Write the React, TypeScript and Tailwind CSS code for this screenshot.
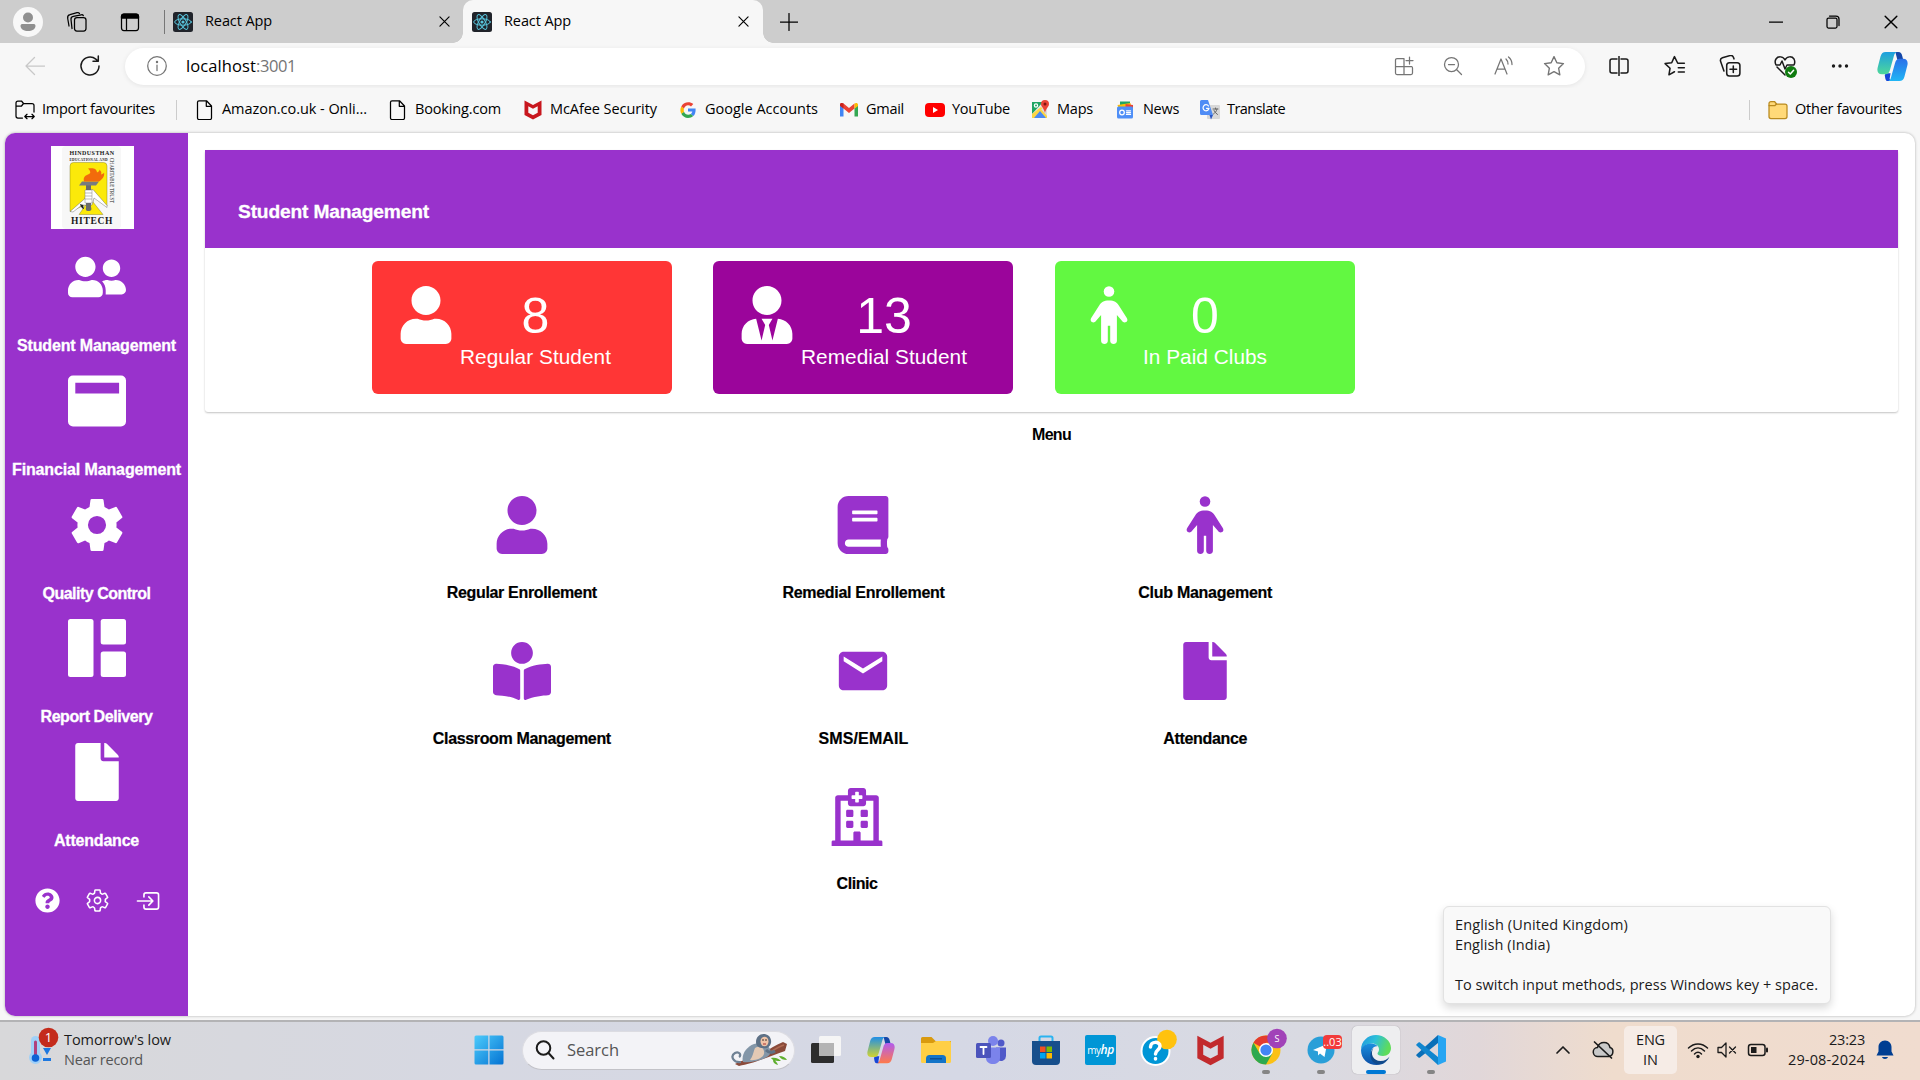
import React, { useLayoutEffect, useRef, useState } from 'react';
import { FaUserFriends, FaFile, FaUser, FaUserTie, FaBook, FaBookReader, FaRegHospital, FaQuestionCircle } from 'react-icons/fa';
import { MdEmail } from 'react-icons/md';
import { IoSettingsOutline, IoEnterOutline, IoSettingsSharp } from 'react-icons/io5';

type Kids = { children?: React.ReactNode };

/* One line of text tracked so that it fills the given width. */
function Fit({ w, className = '', children }: { w: number; className?: string; children: string }) {
  const ref = useRef<HTMLSpanElement>(null);
  const [ls, setLs] = useState(0);
  useLayoutEffect(() => {
    const el = ref.current;
    if (el) setLs((w - el.getBoundingClientRect().width) / children.length);
  }, []);
  return (
    <span className={`block shrink-0 whitespace-pre ${className}`} style={{ width: w }}>
      <span ref={ref} className="inline-block" style={{ letterSpacing: ls }}>{children}</span>
    </span>
  );
}

function Svg({ s = 20, vb = 20, className = '', children }: Kids & { s?: number; vb?: number; className?: string }) {
  return (
    <svg width={s} height={s} viewBox={`0 0 ${vb} ${vb}`} fill="none" stroke="currentColor" strokeWidth={1.25} strokeLinecap="round" strokeLinejoin="round" className={`block shrink-0 ${className}`}>
      {children}
    </svg>
  );
}

const ReactFav = ({ className = '' }: { className?: string }) => (
  <Svg className={className}>
    <rect width="20" height="20" rx="2.500" fill="#20232a" stroke="none" />
    <g stroke="#58c4dc" strokeWidth="1">
      <ellipse cx="10" cy="10" rx="8.300" ry="3.200" />
      <ellipse cx="10" cy="10" rx="8.300" ry="3.200" transform="rotate(60 10 10)" />
      <ellipse cx="10" cy="10" rx="8.300" ry="3.200" transform="rotate(120 10 10)" />
    </g>
    <circle cx="10" cy="10" r="1.600" fill="#58c4dc" stroke="none" />
  </Svg>
);

const Cross = ({ className = '', s = 12 }: { className?: string; s?: number }) => (
  <Svg s={s} vb={12} className={className}><path d="M1 1l10 10M11 1L1 11" /></Svg>
);

const McAfee = ({ s = 20, c = '#c8171e' }: { s?: number; c?: string }) => (
  <Svg s={s}><path d="M1.500 .5L10 5l8.500-4.500v14.500L10 19.500l-8.500-4.500zM5.300 6.300v6.500L10 15.200l4.700-2.400V6.300L10 8.800z" fill={c} fillRule="evenodd" stroke="none" /></Svg>
);

const Ribbon = ({ s, a, b, c, d, id }: { s: number; a: string; b: string; c: string; d: string; id: string }) => (
  <Svg s={s} vb={32}>
    <defs>
      <linearGradient id={`${id}a`} x1="0" y1="0" x2="0" y2="1"><stop stopColor={a} /><stop offset="1" stopColor={b} /></linearGradient>
      <linearGradient id={`${id}b`} x1="0" y1="0" x2="0" y2="1"><stop stopColor={c} /><stop offset="1" stopColor={d} /></linearGradient>
    </defs>
    <g stroke="none">
      <path d="M19 1h3c2.500 0 3.300 1.500 4 4l1 4h-6z" fill="#1547a8" />
      <path d="M9 23h5l-1 6c2 2 0 2-2 2-2.500 0-2.500-4-3-6z" fill="#1846d8" />
      <path d="M9 1h12c-2 0-2.800 1.500-3.500 4l-4 14c-.8 3-2 5-5 5H5c-4 0-5.300-3-4.300-7l3-11.500C4.600 2.500 6 1 9 1z" fill={`url(#${id}a)`} />
      <path d="M23 31H11c2 0 2.800-1.500 3.500-4l4-14c.8-3 2-5 5-5H27c4 0 5.300 3 4.300 7l-3 11.500C27.400 29.500 26 31 23 31z" fill={`url(#${id}b)`} />
    </g>
  </Svg>
);

function TitleBar() {
  return (
    <div className="flex h-[43px] items-center bg-[#cdcdcd] text-black">
      <Svg s={30} vb={30} className="ml-[13px]">
        <g stroke="none">
          <circle cx="15" cy="15" r="15" fill="#f8f8f8" />
          <circle cx="15" cy="10.500" r="5" fill="#909090" />
          <path d="M7.500 19c0-1.500 1-2 2-2h11c1 0 2 .5 2 2 0 3-3.500 5-7.500 5s-7.500-2-7.500-5z" fill="#909090" />
        </g>
      </Svg>
      <Svg s={22} vb={22} className="mr-px ml-[23px]">
        <rect x="8.500" y="6.500" width="11.500" height="13.500" rx="2.500" />
        <path d="M6 17.500l-1-9c-.2-1.800.8-3 2.300-3.200l8-1.500c1-.2 1.700.2 2 .8M3 15L1.700 7.500C1.400 5.500 2.500 4 4 3.700l7-2c1-.3 2 0 2.500.8" />
      </Svg>
      <Svg s={20} className="ml-[31px]">
        <rect x="1.500" y="2" width="17" height="16.500" rx="2.500" />
        <path d="M1.500 6V4.500A2.500 2.500 0 0 1 4 2h12a2.500 2.500 0 0 1 2.500 2.500V6z" fill="currentColor" />
        <path d="M6.500 6v12" />
      </Svg>
      <div className="ml-[24px] h-6 w-px bg-[#777]" />
      <ReactFav className="ml-2" />
      <Fit w={67} className="ml-3 pb-[2px] text-[14.500px]">React App</Fit>
      <Cross className="ml-[167px]" s={11} />
      <div className="relative ml-[13px] flex h-full w-[300px] items-center rounded-t-[10px] bg-[#f7f7f7]">
        <div className="absolute -left-[10px] bottom-0 size-[10px] bg-[radial-gradient(circle_at_0_0,#cdcdcd_9.500px,#f7f7f7_10px)]" />
        <div className="absolute -right-[10px] bottom-0 size-[10px] bg-[radial-gradient(circle_at_100%_0,#cdcdcd_9.500px,#f7f7f7_10px)]" />
        <ReactFav className="ml-[9px]" />
        <Fit w={67} className="ml-3 pb-[2px] text-[14.500px]">React App</Fit>
        <Cross className="ml-[167px]" s={11} />
      </div>
      <Svg s={18} vb={18} className="ml-[17px]"><path d="M9 .5v17M.5 9h17" /></Svg>
      <div className="ml-auto flex items-center">
        <Svg s={14} vb={14}><path d="M.5 7h13" /></Svg>
        <Svg s={14} vb={14} className="ml-[43px]">
          <rect x="1" y="3" width="10" height="10" rx="1.500" />
          <path d="M3.500 1h6.500a3 3 0 0 1 3 3v6.500" />
        </Svg>
        <Cross className="mr-[22px] ml-[44px]" s={14} />
      </div>
    </div>
  );
}

function Toolbar() {
  return (
    <div className="flex h-[45px] items-center bg-[#f7f7f7] pt-px text-[#1a1a1a]">
      <Svg s={20} className="ml-[25px] text-[#c8c8c8]"><path d="M19.500 10H1M9.500 1.500L1 10l8.500 8.500" /></Svg>
      <Svg s={22} vb={22} className="ml-[34px]"><path d="M20 11a9 9 0 1 1-3.200-6.900L19 6M19.300 1v5.300H14" strokeWidth="1.500" /></Svg>
      <div className="ml-[24px] flex h-[37px] w-[1460px] items-center rounded-full bg-white text-[#757575] shadow-[0_1px_5px_rgba(0,0,0,0.08)]">
        <Svg s={20} className="ml-[22px]"><circle cx="10" cy="10" r="9.300" /><path d="M10 9v5.500" /><circle cx="10" cy="6" r=".6" fill="currentColor" /></Svg>
        <Fit w={70} className="ml-[19px] text-[16.500px] text-black">localhost</Fit>
        <Fit w={40} className="text-[16.500px]">:3001</Fit>
        <Svg className="ml-[1098px]"><path d="M1.500 4a1.500 1.500 0 0 1 1.500-1.500h7V18.500H3A1.500 1.500 0 0 1 1.500 17zM1.500 10.500h16a1.500 1.500 0 0 1 1 1.500v5a1.500 1.500 0 0 1-1.500 1.500h-7M15.500 1v7M12 4.500h7" /></Svg>
        <Svg className="ml-[29px]"><circle cx="8.500" cy="8.500" r="7" /><path d="M13.500 13.500l5 5M5.500 8.500h6" /></Svg>
        <Svg className="ml-[31px]"><path d="M1 18L7 3l6 15M3 13h8M12 3c1.500 1.500 2 3 2 5M14.500 1c2.500 2 3.500 4.500 3.500 7.500" /></Svg>
        <Svg s={22} className="ml-[29px]"><path d="M10 1.500l2.600 5.500 6 .8-4.400 4.200 1.100 6-5.300-2.900L4.700 18l1.100-6L1.400 7.800l6-.8z" /></Svg>
      </div>
      <Svg s={20} className="ml-[24px]"><path d="M8 3H3a2 2 0 0 0-2 2v10a2 2 0 0 0 2 2h5M12 3h5a2 2 0 0 1 2 2v10a2 2 0 0 1-2 2h-5M10 .5v19" strokeWidth="1.500" /></Svg>
      <Svg s={22} className="ml-[35px]"><path d="M18.500 7.500h-6L9.500 1.500 7 7l-6 .8L5.500 12l-1 6 5-2.800M13 11.500h5.500M13 15.500h5.500" strokeWidth="1.400" /></Svg>
      <Svg s={22} className="ml-[33px]"><rect x="7" y="7" width="12" height="12" rx="2.500" strokeWidth="1.400" /><path d="M13 10v6M10 13h6M4.500 14.500L1.500 6c-.5-1.500.2-3 1.600-3.500l7-2c1.300-.3 2.500.4 3 1.500l.5 1.500" strokeWidth="1.400" /></Svg>
      <Svg s={24} vb={24} className="ml-8">
        <path d="M12 21l-8-8M12 6C10 2 5 2 3 5c-1.300 2-1 4 0 6h4l2-4 3 8 2-4h7c1-2 1-4 0-6-2-3-7-3-9 1z" strokeWidth="1.500" />
        <circle cx="18" cy="18" r="6" fill="#0f7b0f" stroke="none" /><path d="M15.500 18.200l1.800 1.800 3.300-3.800" stroke="#fff" strokeWidth="1.500" />
      </Svg>
      <Svg s={18} vb={18} className="ml-[34px]"><g fill="currentColor" stroke="none"><circle cx="2.500" cy="9" r="1.700" /><circle cx="9" cy="9" r="1.700" /><circle cx="15.500" cy="9" r="1.700" /></g></Svg>
      <div className="ml-[28px]"><Ribbon s={31} id="cp" a="#1c9fe0" b="#4fd89a" c="#2a6fe8" d="#20b6f5" /></div>
    </div>
  );
}

const Doc = () => <Svg s={20}><path d="M4 .8h7.500l5 5.200V18a1.500 1.500 0 0 1-1.500 1.500H4A1.500 1.500 0 0 1 2.500 18V2.300A1.500 1.500 0 0 1 4 .8zM11.300 1v5.300h5" /></Svg>;
const GLogo = () => (
  <Svg s={20}>
    <g stroke="none">
      <path d="M17.600 8.400H10v3.200h4.300c-.2 1-.8 1.900-1.600 2.400l2.600 2c1.600-1.400 2.500-3.600 2.300-7.600z" fill="#4285f4" />
      <path d="M10 18c2.200 0 4-.7 5.300-2l-2.600-2c-2.300 1.500-5.700.6-6.700-2.300l-2.700 2C4.600 16.300 7.200 18 10 18z" fill="#34a853" />
      <path d="M6 11.700a5 5 0 0 1 0-3.300l-2.700-2a8 8 0 0 0 0 7.300z" fill="#fbbc05" />
      <path d="M10 5.200c1.200 0 2.200.4 3 1.200l2.300-2.300C12 1 5.800 1.500 3.300 6.400l2.700 2c.6-1.900 2.300-3.200 4-3.200z" fill="#ea4335" />
    </g>
  </Svg>
);
const Gmail = () => (
  <Svg s={20}><g stroke="none">
    <path d="M1 5v11.500h3.500V8z" fill="#4285f4" /><path d="M19 5v11.500h-3.500V8z" fill="#34a853" />
    <path d="M1 5.500v-1C1 3 3 2.500 4.500 3.600L10 8l5.500-4.400v5L10 13 4.500 8.500z" fill="#ea4335" />
    <path d="M15.500 3.600C17 2.500 19 3 19 5v1l-3.500 2.700z" fill="#fbbc04" /><path d="M4.500 8.500L1 5.800V5c0-2 2-2.500 3.500-1.400z" fill="#c5221f" />
  </g></Svg>
);
const YouTube = () => <Svg s={20}><g stroke="none"><rect y="3" width="20" height="14" rx="4" fill="#f00" /><path d="M8 7l5 3-5 3z" fill="#fff" /></g></Svg>;
const Maps = () => (
  <Svg s={20}><g stroke="none">
    <path d="M1 2h11l-8 16H1z" fill="#1fa463" /><path d="M12 2h3L4 18H1v-4z" fill="#e8e8e8" /><path d="M1 14l9-7 6 6v5H1z" fill="#fdd643" /><path d="M3 18l6-7 6 7z" fill="#4a8af4" /><path d="M10 9l6 7V8z" fill="#ddd" />
    <path d="M14 0a4 4 0 0 1 4 4c0 3-3 4-4 9-1-5-4-6-4-9a4 4 0 0 1 4-4z" fill="#ea4335" /><circle cx="14" cy="4" r="1.500" fill="#811411" />
    <circle cx="5" cy="5.500" r="1.600" fill="none" stroke="#fff" />
  </g></Svg>
);
const News = () => (
  <Svg s={20}><g stroke="none">
    <path d="M4 1.500h10v5H4z" fill="#1fa463" /><path d="M1.500 5l13-2 1 5H2.500z" fill="#fbbc04" /><path d="M9.500 4l7.500 1v4H9.500z" fill="#ea4335" /><rect x="1" y="6.500" width="16" height="12" rx="1.500" fill="#4f8ff7" />
  </g><circle cx="6" cy="12.500" r="2.300" stroke="#fff" /><path d="M10.500 10.800h4M10.500 12.600h4M10.500 14.400h4" stroke="#fff" /></Svg>
);
const Translate = () => (
  <Svg s={20}><g stroke="none"><rect x="7" y="5" width="13" height="14" rx="1" fill="#d8d8d8" /><path d="M1.500 0H8l5 15H1.500A1.500 1.500 0 0 1 0 13.500v-12A1.500 1.500 0 0 1 1.500 0z" fill="#4f8cf5" /><path d="M9.500 15h3.500l-2 4.500z" fill="#2a56c6" /></g>
    <path d="M8.500 6A3 3 0 1 0 9 8.300H6.500" stroke="#fff" /><path d="M13 9h5M15.500 8v1M17 9c-.5 2.500-2 4-3.500 5M14 10.500c.7 1.500 2 3 3.500 4" stroke="#666" strokeWidth="1" /></Svg>
);
const Folder = () => <Svg s={20}><path d="M1 3.500A2 2 0 0 1 3 1.500h3.500L8.500 4H17a2 2 0 0 1 2 2v10.500a2 2 0 0 1-2 2H3a2 2 0 0 1-2-2z" fill="#ffd978" stroke="#b98a1e" /><path d="M1 5.500h6L8.500 4" stroke="#b98a1e" /></Svg>;

function Bookmark({ icon, w, label, gap, pad }: { icon: React.ReactNode; w: number; label: string; gap: string; pad: string }) {
  return <div className={`flex items-center ${gap}`}>{icon}<Fit w={w} className={`pb-px text-[14.500px] ${pad}`}>{label}</Fit></div>;
}

function Bookmarks() {
  return (
    <div className="flex h-[45px] items-center bg-[#f7f7f7] pb-[2px] text-black">
      <Bookmark gap="ml-[15px]" pad="ml-[7px] mr-px" w={113} label="Import favourites" icon={
        <Svg s={20}><path d="M7.500 18H3a2 2 0 0 1-2-2V3a2 2 0 0 1 2-2h3.500l2 2.500H17a2 2 0 0 1 2 2V12M1 6h5.500l2-2.500M10 16.500h9M12 14.300L9.800 16.500l2.200 2.200M17 14.300l2.200 2.200-2.200 2.200" /></Svg>} />
      <div className="ml-5 h-5 w-px bg-[#ccc]" />
      <Bookmark gap="ml-[18px]" pad="ml-[7px]" w={145} label="Amazon.co.uk - Onli..." icon={<Doc />} />
      <Bookmark gap="ml-[21px]" pad="ml-[7px]" w={86} label="Booking.com" icon={<Doc />} />
      <Bookmark gap="ml-[22px]" pad="ml-[7px]" w={107} label="McAfee Security" icon={<McAfee />} />
      <Bookmark gap="ml-[21px]" pad="ml-[7px]" w={113} label="Google Accounts" icon={<GLogo />} />
      <Bookmark gap="ml-[21px]" pad="ml-[7px]" w={38} label="Gmail" icon={<Gmail />} />
      <Bookmark gap="ml-[21px]" pad="ml-[7px]" w={58} label="YouTube" icon={<YouTube />} />
      <Bookmark gap="ml-[21px]" pad="ml-[6px] mr-px" w={36} label="Maps" icon={<Maps />} />
      <Bookmark gap="ml-[22px]" pad="ml-[7px]" w={36} label="News" icon={<News />} />
      <Bookmark gap="ml-[21px]" pad="ml-[7px]" w={58} label="Translate" icon={<Translate />} />
      <div className="ml-auto h-5 w-px bg-[#ccc]" />
      <div className="mr-[18px]"><Bookmark gap="ml-[18px]" pad="ml-[7px]" w={107} label="Other favourites" icon={<Folder />} /></div>
    </div>
  );
}

const Man = () => (
  <svg width="58" height="58" viewBox="0 0 58 58" fill="currentColor" className="block">
    <circle cx="29" cy="5.500" r="5.300" />
    <path d="M29 14.500c5.500 0 7.800 1.800 9.500 4.600L46.800 32c1 1.800.6 3.200-.7 4-1.500.9-3.200.3-4.200-1.200L36.900 29v26c0 4-6.700 4-6.700 0V39.700h-2.400V55c0 4-6.700 4-6.700 0V29l-5 5.800c-1 1.500-2.700 2.100-4.200 1.200-1.300-.8-1.700-2.200-.7-4l8.300-12.900c1.700-2.800 4-4.600 9.500-4.600z" />
  </svg>
);

const WindowIcon = () => (
  <svg width="58" height="58" viewBox="0 0 58 58" fill="currentColor" className="block">
    <path fillRule="evenodd" d="M5 3.500h48a5 5 0 0 1 5 5v41a5 5 0 0 1-5 5H5a5 5 0 0 1-5-5v-41a5 5 0 0 1 5-5zM7.300 10.800v10.700h43.800V10.800z" />
  </svg>
);

const DashIcon = () => (
  <svg width="58" height="58" viewBox="0 0 58 58" fill="currentColor" className="block">
    <rect width="25.500" height="58" rx="2.500" /><rect x="32.700" width="25.300" height="25.500" rx="2.500" /><rect x="32.700" y="32.500" width="25.300" height="25.500" rx="2.500" />
  </svg>
);

const Crest = () => (
  <svg width="83" height="83" viewBox="0 0 83 83" className="mt-[13px] mr-2 block shrink-0 bg-white">
    <rect x="11" width="59" height="83" rx="4" fill="#f7f7f7" />
    <g fontFamily="Liberation Serif" fontWeight="700" fill="#1a1a1a">
      <text x="18.500" y="9.300" fontSize="6" textLength="44.500">HINDUSTHAN</text>
      <text x="18.500" y="14.700" fontSize="3.500" textLength="38">EDUCATIONAL AND</text>
      <text x="20" y="78" fontSize="9.500" textLength="41.500">HITECH</text>
      <text transform="translate(59 12) rotate(90)" fontSize="5.500" textLength="45" lengthAdjust="spacingAndGlyphs" fontWeight="400">CHARITABLE TRUST</text>
    </g>
    <path d="M19 65.500V20a3.500 3.500 0 0 1 3.500-3.500h30A3.500 3.500 0 0 1 56 20v40L42 46v10l10 12.500H28l7-10z" fill="#fbe90a" stroke="#77701a" strokeWidth=".4" />
    <path d="M19 65.500l15-13 2-8 6-1 14 16v2L43 52l-2 7H31l-9 7z" fill="#fff" stroke="#555" strokeWidth=".4" />
    <path d="M35 39h5v22c1 3 0 4-2.500 4s-3-1-2.500-4z" fill="#6b6b6b" /><path d="M34 44h7v13h-7z" fill="#fff" stroke="#666" strokeWidth=".4" />
    <path d="M34 47h7M34 50h7M34 53h7" stroke="#777" strokeWidth=".5" />
    <path d="M28 39.500l3-4h17l-3 4z" fill="#777b80" />
    <path d="M33 35.500c-1-4 1-6 4-7 3-1 3-3 0-6 5-1 9 0 9 4 2-1 3-2 2-3 2 1 3 3 2 5 2-1 3-1 3-2 1 4-2 7-5 9z" fill="#f26b0c" />
    <path d="M29 58c1 4 3 5 4 5l-1-4z" fill="#222" />
  </svg>
);

const sideItems = [
  { label: 'Student Management', w: 159, icon: <FaUserFriends size={58} /> },
  { label: 'Financial Management', w: 169, icon: <WindowIcon /> },
  { label: 'Quality Control', w: 108, icon: <IoSettingsSharp size={58} /> },
  { label: 'Report Delivery', w: 112, icon: <DashIcon /> },
  { label: 'Attendance', w: 85, icon: <FaFile size={58} /> },
];

const menuItems = [
  { label: 'Regular Enrollement', w: 150, icon: <FaUser size={58} /> },
  { label: 'Remedial Enrollement', w: 162, icon: <FaBook size={58} /> },
  { label: 'Club Management', w: 134, icon: <Man /> },
  { label: 'Classroom Management', w: 178, icon: <FaBookReader size={58} /> },
  { label: 'SMS/EMAIL', w: 90, icon: <MdEmail size={58} /> },
  { label: 'Attendance', w: 84, icon: <FaFile size={58} /> },
];

const cards = [
  { n: '8', label: 'Regular Student', w: 151, bg: 'bg-[#ff3636]', icon: <FaUser size={58} /> },
  { n: '13', label: 'Remedial Student', w: 166, bg: 'bg-[#9b059b] mr-px', icon: <FaUserTie size={58} /> },
  { n: '0', label: 'In Paid Clubs', w: 124, bg: 'bg-[#62f841]', icon: <Man /> },
];

function Sidebar() {
  return (
    <div className="flex w-[183px] shrink-0 flex-col items-center rounded-l-[10px] bg-[#9932cc] text-white">
      <Crest />
      <div className="mt-[19px] flex flex-col">
        {sideItems.map((it) => (
          <div key={it.label} className="flex h-[123.75px] flex-col items-center">
            {it.icon}
            <Fit w={it.w} className="mt-[28px] font-['Liberation_Sans'] text-base font-bold [-webkit-text-stroke:0.3px_currentColor]">{it.label}</Fit>
          </div>
        ))}
      </div>
      <div className="mt-[21px] flex items-center pl-[2px]">
        <FaQuestionCircle size={25} />
        <IoSettingsOutline size={25} className="ml-[25px]" />
        <IoEnterOutline size={26} className="ml-[25px]" />
      </div>
    </div>
  );
}

function Main() {
  return (
    <div className="flex flex-1 flex-col pt-[17px] pr-[17px] pl-[17px] font-['Liberation_Sans']">
      <div className="h-[262px] rounded-[3px] shadow-[0_1px_2px_rgba(0,0,0,0.24)]">
        <div className="flex h-[98px] items-center bg-[#9932cc] pt-[27px] pl-[33px]">
          <Fit w={191} className="text-[19.200px] font-bold text-white [-webkit-text-stroke:0.3px_currentColor]">Student Management</Fit>
        </div>
        <div className="mt-[13px] ml-[167px] flex gap-[41px]">
          {cards.map((c) => (
            <div key={c.label} className={`flex h-[133px] w-[300px] rounded-md pt-[25px] pl-[25px] text-white ${c.bg}`}>
              {c.icon}
              <div className="ml-[5px] flex flex-col items-center pt-[2px]">
                <div className="text-[50px] leading-[56px]">{c.n}</div>
                <Fit w={c.w} className="text-[20.800px] leading-[26px]">{c.label}</Fit>
              </div>
            </div>
          ))}
        </div>
      </div>
      <Fit w={39} className="mt-[11px] self-center text-base font-bold text-black">Menu</Fit>
      <div className="mt-[49px] ml-[146px] grid w-[1025px] grid-cols-3">
        {menuItems.map((it) => (
          <div key={it.label} className="flex h-[146px] flex-col items-center text-[#9932cc]">
            {it.icon}
            <Fit w={it.w} className="mt-[27px] text-base font-bold text-black [-webkit-text-stroke:0.2px_currentColor]">{it.label}</Fit>
          </div>
        ))}
      </div>
      <div className="ml-[145px] flex w-[1014px] flex-col items-center text-[#9932cc]">
        <FaRegHospital size={58} />
        <Fit w={41} className="mt-[26px] text-base font-bold text-black [-webkit-text-stroke:0.2px_currentColor]">Clinic</Fit>
      </div>
    </div>
  );
}

const apps: { key: string; dot?: boolean; active?: boolean; icon: React.ReactNode }[] = [
  { key: 'taskview', icon: <Svg s={32} vb={32}><g stroke="none"><rect x="1" y="9" width="23" height="20" rx="1.500" fill="#2d2d2d" /><rect x="9" y="2" width="22" height="20" rx="1.500" fill="#f5f5f5" /><path d="M9 9h15v13H10.500A1.500 1.500 0 0 1 9 20.500z" fill="#b4b4b4" /></g></Svg> },
  { key: 'copilot', icon: <Ribbon s={28} id="tb" a="#1e8ee8" b="#d2d430" c="#b05cf0" d="#ff7a4a" /> },
  { key: 'explorer', icon: <Svg s={32} vb={32}><g stroke="none"><path d="M1 4.500A1.500 1.500 0 0 1 2.500 3h9l4 4H31v8H1z" fill="#d99a0f" /><path d="M1 9h12l3-2h13.500A1.500 1.500 0 0 1 31 8.500v19a1.500 1.500 0 0 1-1.500 1.500h-27A1.500 1.500 0 0 1 1 27.500z" fill="#ffcf45" /><path d="M6 29v-4.500A3.500 3.500 0 0 1 9.500 21h13a3.500 3.500 0 0 1 3.500 3.500V29z" fill="#1374c8" /><rect x="10" y="24" width="12" height="1.500" fill="#0b4f96" /></g></Svg> },
  { key: 'teams', icon: <Svg s={32} vb={32}><g stroke="none"><circle cx="26" cy="9" r="3.500" fill="#5059c9" /><path d="M21 13.500h10V22a5 5 0 0 1-8 4z" fill="#5059c9" /><circle cx="18" cy="7" r="5" fill="#7b83eb" /><path d="M11 13.500h14V24c0 8-14 8-14 0z" fill="#7b83eb" /><rect x="1" y="9" width="15" height="15" rx="1.500" fill="#4b53bc" /></g><path d="M5.500 13h6M8.500 13v7" stroke="#fff" strokeWidth="1.800" /></Svg> },
  { key: 'store', icon: <Svg s={32} vb={32}><path d="M9.500 9V4A1.500 1.500 0 0 1 11 2.500h10A1.500 1.500 0 0 1 22.500 4v5" stroke="#2bb3f0" strokeWidth="2" /><g stroke="none"><path d="M2 7h28v20a4 4 0 0 1-4 4H6a4 4 0 0 1-4-4z" fill="#174f8c" /><rect x="10" y="12.500" width="5.500" height="5.500" fill="#f25022" /><rect x="16.500" y="12.500" width="5.500" height="5.500" fill="#7fba00" /><rect x="10" y="19" width="5.500" height="5.500" fill="#00a4ef" /><rect x="16.500" y="19" width="5.500" height="5.500" fill="#ffb900" /></g></Svg> },
  { key: 'myhp', icon: <div className="flex h-[30px] w-[31px] items-center justify-center rounded-xs bg-[#0096d6] font-['Open_Sans'] text-[10px] tracking-[-0.5px] text-white">my<i className="text-[12px] font-semibold">hp</i></div> },
  { key: 'help', icon: <Svg s={34} vb={34} className="overflow-visible"><g stroke="none"><circle cx="16.500" cy="18" r="15" fill="#fff" /><circle cx="16.500" cy="18" r="13" fill="#0096d6" /><circle cx="28" cy="6.500" r="9.800" fill="#ffc20e" /></g><path d="M11.500 14c0-6 9.500-6 9.500-1 0 4-4.500 4-4.500 8M16.500 25.500v.5" stroke="#fff" strokeWidth="3.500" /></Svg> },
  { key: 'mcafee', icon: <McAfee s={31} c="#c22a2d" /> },
  { key: 'chrome', dot: true, icon: (
    <Svg s={32} vb={32} className="overflow-visible"><g stroke="none">
      <circle cx="16" cy="16" r="14.500" fill="#fbc116" />
      <path d="M16 16L3.440 8.750A14.500 14.500 0 0 1 28.560 8.750H16z" fill="#e33b2e" />
      <path d="M16 16l6.300 3.600L16 30.500A14.500 14.500 0 0 1 3.440 8.750L9.700 19.600z" fill="#2da94f" />
      <circle cx="16" cy="16" r="7" fill="#fff" /><circle cx="16" cy="16" r="5.600" fill="#4285f4" />
      <circle cx="27" cy="4.500" r="9.800" fill="#a142b8" /><text x="27" y="8" fontSize="9" fontFamily="Open Sans" textAnchor="middle" fill="#fff">S</text>
    </g></Svg>) },
  { key: 'telegram', dot: true, icon: (
    <Svg s={30} vb={30} className="overflow-visible"><g stroke="none">
      <circle cx="15" cy="15" r="13.500" fill="#2a9fd8" /><path d="M7 15l14-6-2.500 13-4.500-3.500-2 2v-4z" fill="#fff" />
      <rect x="17" y="0" width="19" height="14" rx="4" fill="#f23b3b" /><text x="26.500" y="11" fontSize="11" fontFamily="Open Sans" textAnchor="middle" fill="#fff">..03</text>
    </g></Svg>) },
  { key: 'edge', active: true, icon: (
    <Svg s={32} vb={32}>
      <defs>
        <linearGradient id="eg" x1="0" y1="0" x2="1" y2="0.300"><stop stopColor="#2094e0" /><stop offset=".5" stopColor="#2cc0d8" /><stop offset="1" stopColor="#5fdc5a" /></linearGradient>
        <linearGradient id="eb" x1="0" y1="0" x2="0" y2="1"><stop stopColor="#1a8fdf" /><stop offset="1" stopColor="#0c4fa5" /></linearGradient>
      </defs>
      <g stroke="none">
        <path d="M1 16C1 7 8 1 16 1s15 6 15 13c0 5-3.500 8-8 8-3.500 0-5.500-1.200-5.500-2.500 0-1 1.500-1.500 1.500-4C19 12 16 9.500 12 9.500 6 9.500 2 13 1 16z" fill="url(#eg)" />
        <path d="M1 16c1-4 5-6.500 10-6.500 3 0 5 1 6.500 2.700C13 11.500 11 16 11 19c0 6 5 10 10 10 2 0 4-.5 5-1.200C23.500 30 20 31 16.500 31 8 31 1 25 1 16z" fill="url(#eb)" />
        <path d="M13.500 14c-4 6 0 13 7 13 4 0 7.500-2 9-4.500C27.500 28 22 31 17 30c-8-2-8-12-3.500-16z" fill="#114a8b" />
      </g>
    </Svg>) },
  { key: 'vscode', dot: true, icon: (
    <Svg s={32} vb={32}><g stroke="none">
      <path d="M23 1l8 3.500v23L23 31z" fill="#27a5f2" /><path d="M1.500 20.500L23 1v8L5 23.500c-.6.500-1 .4-1.500 0l-2-1.700c-.5-.4-.5-.9 0-1.300z" fill="#0a6fb8" /><path d="M1.500 11.500L23 31v-8L5 8.500c-.6-.5-1-.4-1.500 0l-2 1.700c-.5.400-.5.900 0 1.300z" fill="#1186cf" />
    </g></Svg>) },
];

const Monkey = () => (
  <svg width="58" height="32" viewBox="0 0 58 32" className="mr-[5px] ml-auto block">
    <path d="M4 30c6-4 16-5 26-10 8-4 14-9 22-12l4 2-2 7c-8 3-14 5-22 8-10 4-16 5-24 7z" fill="#8a4a3a" />
    <path d="M34 21c7-4 13-8 19-10" stroke="#b06a52" strokeWidth="1.500" fill="none" />
    <path d="M10 28c-8 1-11-6-6-9 4-2 7 2 4 4" fill="none" stroke="#6f8194" strokeWidth="2.200" />
    <path d="M40 24c5-1 8 1 10 3-4 0-8 0-10-3zM48 22c4 0 7 2 8 4-4 0-6-1-8-4zM42 26c2 0 4 2 5 5-3-1-5-2-5-5z" fill="#5fae2e" />
    <path d="M12 28c-2-7 3-15 11-18 6-2 14 0 16 5 2 5-2 8-7 10-6 2-14 4-20 3z" fill="#8396a8" />
    <path d="M24 14c5-3 10 0 9 6-1 4-9 7-14 6 3-4 3-7 5-12z" fill="#e3c9b4" />
    <path d="M25 8c0-5 3.500-8 7.500-8s8.500 3 7.500 9c-1 4-4 6-8 5-4 0-7-2-7-6z" fill="#5e7186" />
    <ellipse cx="33.500" cy="7.500" rx="4" ry="4.800" fill="#f0c3a6" /><circle cx="32" cy="6" r=".8" fill="#222" /><circle cx="35" cy="6" r=".8" fill="#222" /><path d="M32 10h3" stroke="#a33" strokeWidth="1" />
    <path d="M35 16c3 3 6 3 9 1" stroke="#5e7186" strokeWidth="3" fill="none" />
  </svg>
);

function Taskbar() {
  return (
    <div className="flex h-[60px] items-center border-t-2 border-[#b3b3b5] bg-[linear-gradient(90deg,#d8d8da_0%,#d6d8e2_25%,#d5d8e5_50%,#d9dae2_68%,#e1d7d9_77%,#efdccd_84%,#f0dccf_100%)] pb-[2px] text-[#1b1b1b]">
      <div className="flex h-full w-[474px] shrink-0 items-center">
        <Svg s={34} vb={34} className="mb-[2px] ml-[27px] overflow-visible">
          <rect x="4" y="4" width="9" height="22" rx="4.500" fill="#9fd0f8" stroke="none" /><circle cx="8.500" cy="25.500" r="6.500" fill="#9fd0f8" stroke="none" />
          <path d="M8.500 10v14" stroke="#b0407c" strokeWidth="3" /><circle cx="8.500" cy="26" r="3.800" fill="#0c63d6" stroke="none" />
          <path d="M16 16h8l-4 7zM16 26h8v3h-8z" fill="#1d78e0" stroke="none" />
          <circle cx="21.500" cy="5.500" r="9.800" fill="#c42b1c" stroke="none" />
          <text x="21.500" y="10" fontSize="13" fontFamily="Open Sans" textAnchor="middle" fill="#fff" stroke="none">1</text>
        </Svg>
        <div className="ml-[3px] pb-px text-[14.500px] leading-5">
          <Fit w={107}>Tomorrow's low</Fit>
          <Fit w={79} className="text-[#555]">Near record</Fit>
        </div>
      </div>
      <Svg s={30} vb={30}><defs><linearGradient id="w" x1="0" y1="0" x2="1" y2="1"><stop stopColor="#4ccbfb" /><stop offset="1" stopColor="#0573d3" /></linearGradient></defs><path d="M2 .5h12.300v13.800H.5V2A1.500 1.500 0 0 1 2 .5zM15.500.5H28A1.500 1.500 0 0 1 29.500 2v12.300h-14zM.5 15.500h13.800v14H2A1.500 1.500 0 0 1 .5 28zM15.500 15.500h14V28a1.500 1.500 0 0 1-1.500 1.500H15.500z" fill="url(#w)" stroke="none" /></Svg>
      <div className="ml-[18px] flex h-[39px] w-[273px] shrink-0 items-center rounded-full border border-[#dcdce2] border-b-[#c2c2c8] bg-[#f3f3f7]">
        <Svg s={20} className="ml-[12px]"><circle cx="8.500" cy="8" r="6.800" strokeWidth="2" /><path d="M13.500 13l5 5.500" strokeWidth="2" /></Svg>
        <Fit w={52} className="ml-[12px] text-[16.500px] text-[#555]">Search</Fit>
        <Monkey />
      </div>
      <div className="ml-[3px] flex h-full">
        {apps.map((a) => (
          <div key={a.key} className="flex h-full w-[55px] items-center justify-center">
            <div className={`relative flex h-12 w-12 items-center justify-center rounded-[5px] ${a.active ? 'bg-[#eeeef0] shadow-[0_0_1px_rgba(0,0,0,0.35)]' : ''}`}>
              {a.icon}
              {a.dot && <div className="absolute bottom-0 h-1 w-2 rounded-full bg-[#858585]" />}
              {a.active && <div className="absolute bottom-0 h-1 w-5 rounded-full bg-[#0078d4]" />}
            </div>
          </div>
        ))}
      </div>
      <div className="ml-auto flex items-center">
        <Svg s={16} vb={16}><path d="M2 11l6-6 6 6" strokeWidth="1.700" /></Svg>
        <Svg s={22} vb={22} className="ml-[21px]"><path d="M6 17.500a4.500 4.500 0 0 1-.5-9C6.500 5 9 3.500 12 3.500c3.500 0 5.500 2.500 6 5 4 1 4 8-1 9z" fill="#c9c9c9" strokeWidth="1.500" /><path d="M2.500 3l17 16" strokeWidth="1.700" /></Svg>
        <div className="ml-[10px] flex h-12 w-[53px] flex-col items-center justify-center rounded-[5px] bg-[#f6ece6] pb-px text-[14.500px] leading-5">
          <Fit w={29}>ENG</Fit><Fit w={15}>IN</Fit>
        </div>
        <Svg s={22} vb={22} className="ml-[10px]"><path d="M1.500 9c5.500-5.500 13.500-5.500 19 0M4.500 12c4-4 9-4 13 0M7.500 15c2.300-2.200 4.700-2.200 7 0" strokeWidth="1.500" /><circle cx="11" cy="17.500" r="1.700" fill="currentColor" stroke="none" /></Svg>
        <Svg s={20} className="ml-[8px]"><path d="M1 7.500h3.500L9 3v14l-4.500-4.500H1zM12.500 7l6 6M18.500 7l-6 6" strokeWidth="1.300" /></Svg>
        <Svg s={22} vb={22} className="ml-[10px]"><rect x="1.500" y="5.500" width="16.500" height="11" rx="2.500" strokeWidth="1.500" /><rect x="4" y="8" width="5.500" height="6" fill="currentColor" stroke="none" /><path d="M20 9.500v3" strokeWidth="2" /></Svg>
        <div className="ml-[19px] flex w-[77px] flex-col items-end pb-px text-[14.500px] leading-5">
          <Fit w={36}>23:23</Fit><Fit w={77}>29-08-2024</Fit>
        </div>
        <Svg s={20} className="mr-[25px] ml-[10px]"><path d="M10 .5c4 0 6.500 3 6.500 6.500v4.500l2 4H1.500l2-4V7c0-3.500 2.500-6.500 6.500-6.500zM7 17h6c-.5 2.500-5.500 2.500-6 0z" fill="#003e92" stroke="none" /></Svg>
      </div>
    </div>
  );
}

export default function App() {
  return (
    <div className="relative flex h-[1080px] w-[1920px] flex-col overflow-hidden bg-[#f7f7f7] font-['Open_Sans',sans-serif]">
      <TitleBar />
      <Toolbar />
      <Bookmarks />
      <div className="mr-[5px] mb-1 ml-[5px] flex flex-1 rounded-[10px] bg-white shadow-[0_0_3px_rgba(0,0,0,0.3)]">
        <Sidebar />
        <Main />
      </div>
      <Taskbar />
      <div className="absolute top-[906px] left-[1443px] h-[98px] w-[388px] rounded-md border border-[#e2e2e2] bg-[#f9f9f9] pt-[8px] pl-[11px] text-[14.500px] leading-5 text-[#1b1b1b] shadow-[0_4px_8px_rgba(0,0,0,0.15)]">
        <Fit w={173}>English (United Kingdom)</Fit>
        <Fit w={95}>English (India)</Fit>
        <Fit w={363} className="mt-5">To switch input methods, press Windows key + space.</Fit>
      </div>
    </div>
  );
}
